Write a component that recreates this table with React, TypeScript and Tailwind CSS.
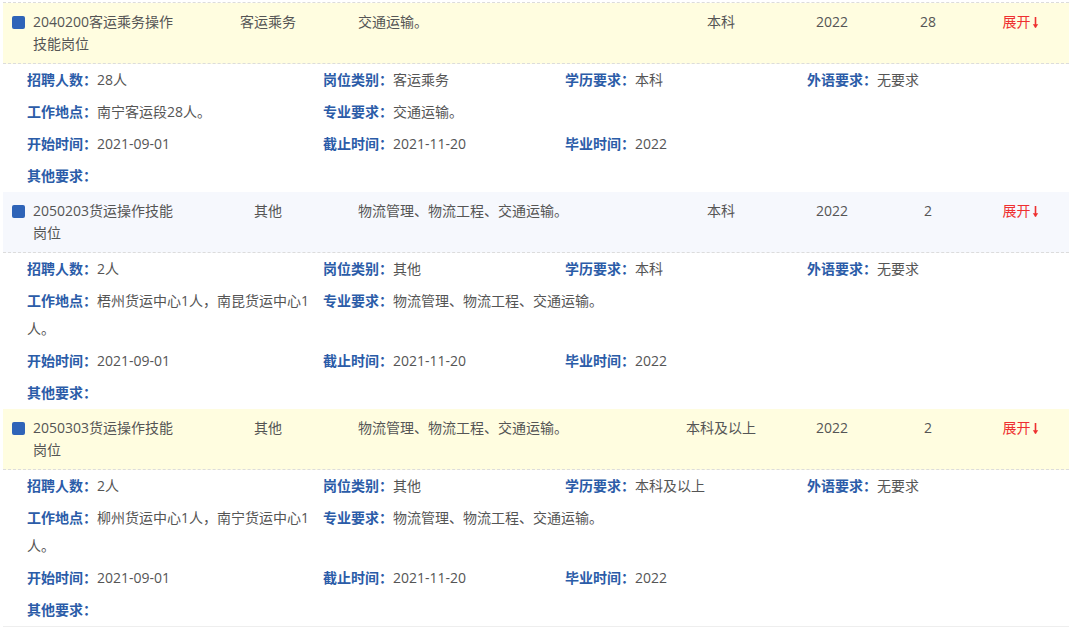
const font = { fontFamily: '"Open Sans", "Noto Sans CJK SC", sans-serif' };

interface Job {
  code: string;
  category: string;
  major: string;
  education: string;
  year: string;
  count: string;
  place: string;
  bg: string;
}

const jobs: Job[] = [
  {
    code: '2040200客运乘务操作技能岗位',
    category: '客运乘务',
    major: '交通运输。',
    education: '本科',
    year: '2022',
    count: '28',
    place: '南宁客运段28人。',
    bg: 'bg-[#fffde0]',
  },
  {
    code: '2050203货运操作技能岗位',
    category: '其他',
    major: '物流管理、物流工程、交通运输。',
    education: '本科',
    year: '2022',
    count: '2',
    place: '梧州货运中心1人，南昆货运中心1人。',
    bg: 'bg-[#f6f8fd]',
  },
  {
    code: '2050303货运操作技能岗位',
    category: '其他',
    major: '物流管理、物流工程、交通运输。',
    education: '本科及以上',
    year: '2022',
    count: '2',
    place: '柳州货运中心1人，南宁货运中心1人。',
    bg: 'bg-[#fffde0]',
  },
];

function Field({ label, value }: { label: string; value?: string }) {
  return (
    <div className="leading-[28px]">
      <span className="font-bold text-[#2b5ca8]">{label}：</span>
      <span className="text-[#555]">{value}</span>
    </div>
  );
}

function JobRow({ job }: { job: Job }) {
  return (
    <div>
      <div className={`flex items-start ${job.bg} border-b border-dashed border-[#dcdcdc] pt-[8px] pb-[8px] text-[14px] leading-[22px] text-[#555]`}>
        <div className="flex w-[197px] items-start pl-[9px]">
          <span className="mt-[5px] mr-[8px] h-[13px] w-[13px] shrink-0 rounded-[2px] bg-[#2f64b8]" />
          <span className="w-[150px]">{job.code}</span>
        </div>
        <div className="w-[136px] text-center">{job.category}</div>
        <div className="w-[324px] pl-[22px]">{job.major}</div>
        <div className="w-[122px] text-center">{job.education}</div>
        <div className="w-[100px] text-center">{job.year}</div>
        <div className="w-[92px] text-center">{job.count}</div>
        <div className="flex flex-1 items-center justify-center pr-[2px] text-[#ee3030]">
          展开
          <svg width="7" height="13" viewBox="0 0 7 13" className="ml-[1px]">
            <path d="M3.5 1v10.5" stroke="#ee3030" strokeWidth="1.6" />
            <path d="M0.8 8.2L3.5 12l2.7-3.8z" fill="#ee3030" />
          </svg>
        </div>
      </div>
      <div className="grid grid-cols-[296px_242px_242px_1fr] gap-y-[4px] py-[2px] pl-[24px] text-[14px]">
        <Field label="招聘人数" value={`${job.count}人`} />
        <Field label="岗位类别" value={job.category} />
        <Field label="学历要求" value={job.education} />
        <Field label="外语要求" value="无要求" />
        <div className="pr-[4px]">
          <Field label="工作地点" value={job.place} />
        </div>
        <div className="col-span-3">
          <Field label="专业要求" value={job.major} />
        </div>
        <Field label="开始时间" value="2021-09-01" />
        <Field label="截止时间" value="2021-11-20" />
        <div className="col-span-2">
          <Field label="毕业时间" value={job.year} />
        </div>
        <div className="col-span-4">
          <Field label="其他要求" />
        </div>
      </div>
    </div>
  );
}

export default function App() {
  return (
    <div className="h-[628px] w-[1080px] overflow-hidden bg-white" style={font}>
      <div className="ml-[3px] mt-[2px] w-[1066px] border-t border-dashed border-[#dcdcdc]">
        {jobs.map((job) => (
          <JobRow key={job.code} job={job} />
        ))}
        <div className="border-t border-[#eeeeee]" />
      </div>
    </div>
  );
}
